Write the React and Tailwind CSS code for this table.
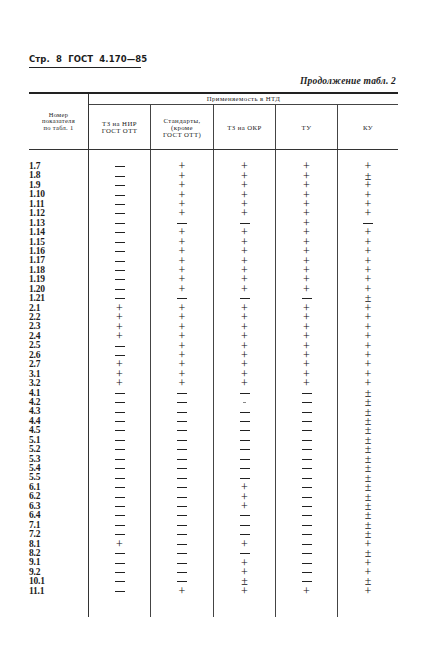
import React from 'react';

const ROWS = [
  ['1.7', '-++++'], ['1.8', '-+++±'], ['1.9', '-++++'], ['1.10', '-++++'],
  ['1.11', '-++++'], ['1.12', '-++++'], ['1.13', '---+-'], ['1.14', '-++++'],
  ['1.15', '-++++'], ['1.16', '-++++'], ['1.17', '-++++'], ['1.18', '-++++'],
  ['1.19', '-++++'], ['1.20', '-++++'], ['1.21', '----±'], ['2.1', '+++++'],
  ['2.2', '+++++'], ['2.3', '+++++'], ['2.4', '+++++'], ['2.5', '-++++'],
  ['2.6', '-++++'], ['2.7', '+++++'], ['3.1', '+++++'], ['3.2', '+++++'],
  ['4.1', '----±'], ['4.2', '--.-±'], ['4.3', '----±'], ['4.4', '----±'],
  ['4.5', '----±'], ['5.1', '----±'], ['5.2', '----±'], ['5.3', '----±'],
  ['5.4', '----±'], ['5.5', '----±'], ['6.1', '--+-±'], ['6.2', '--+-±'],
  ['6.3', '--+-±'], ['6.4', '----±'], ['7.1', '----±'], ['7.2', '----±'],
  ['8.1', '+-+-+'], ['8.2', '----±'], ['9.1', '--+-+'], ['9.2', '--+-+'],
  ['10.1', '--±-±'], ['11.1', '-++++'],
];

const SUB_HEADERS = [
  ['ТЗ на НИР', 'ГОСТ ОТТ'],
  ['Стандарты,', '(кроме', 'ГОСТ ОТТ)'],
  ['ТЗ на ОКР'],
  ['ТУ'],
  ['КУ'],
];

const COL_WIDTHS = ['w-[62px]', 'w-[63px]', 'w-[62px]', 'w-[62px]', 'w-[60px]'];

function Mark({ v }) {
  if (v === '-') return <span className="block w-[10px] h-px bg-[#222]" />;
  if (v === '.') return <span className="block w-[3px] h-px bg-[#888]" />;
  return <span className="text-[12px] leading-[9px] text-[#111]">{v}</span>;
}

export default function App() {
  return (
    <div className="w-[435px] h-[659px] bg-white overflow-hidden pl-[29px] pt-[54px] text-[#1c1c1c] font-['Liberation_Serif',serif]">
      {/* Running head */}
      <div className="w-[112px] border-b-[1.5px] border-[#222] pb-[3px] font-['DejaVu_Sans',sans-serif] font-bold text-[8.5px] leading-[10px] tracking-[0.1px] whitespace-nowrap">
        Стр.&nbsp;&nbsp;8&nbsp;&nbsp;ГОСТ&nbsp;&nbsp;4.170—85
      </div>

      <div className="w-[369px] text-right pr-[2px] mt-[8px] italic font-bold text-[9.5px] leading-[11px] tracking-[0.2px]">
        Продолжение табл. 2
      </div>

      {/* Table */}
      <div className="w-[369px] mt-[5px] border-t-[2px] border-[#222]">
        {/* Head */}
        <div className="flex border-b-[1.5px] border-[#333]">
          <div className="w-[60px] border-r-[1.5px] border-[#333] flex flex-col items-center justify-center text-[6.5px] leading-[6.6px] tracking-[0.3px] text-center">
            <span>Номер</span>
            <span>показателя</span>
            <span>по табл. 1</span>
          </div>
          <div className="flex-1">
            <div className="h-[11px] border-b border-[#444] flex items-center justify-center text-[6.8px] tracking-[0.4px]">
              Применяемость в НТД
            </div>
            <div className="flex h-[44px]">
              {SUB_HEADERS.map((lines, i) => (
                <div
                  key={i}
                  className={`${COL_WIDTHS[i]} ${i < 4 ? 'border-r border-[#444]' : ''} flex flex-col items-center justify-center text-[6.8px] leading-[7px] tracking-[0.4px] text-center`}
                >
                  {lines.map((l) => <span key={l}>{l}</span>)}
                </div>
              ))}
            </div>
          </div>
        </div>

        {/* Body */}
        <div className="flex h-[467px]">
          <div className="w-[60px] border-r-[1.5px] border-[#333] pt-[12px] font-bold text-[9.5px] leading-[9.45px] tracking-[-0.2px]">
            {ROWS.map(([n]) => (
              <div key={n} className="h-[9.45px]">{n}</div>
            ))}
          </div>
          {COL_WIDTHS.map((w, c) => (
            <div key={c} className={`${w} ${c < 4 ? 'border-r border-[#444]' : ''} pt-[12px]`}>
              {ROWS.map(([n, vals]) => (
                <div key={n} className="h-[9.45px] flex items-center justify-center">
                  <Mark v={vals[c]} />
                </div>
              ))}
            </div>
          ))}
        </div>
      </div>
    </div>
  );
}
